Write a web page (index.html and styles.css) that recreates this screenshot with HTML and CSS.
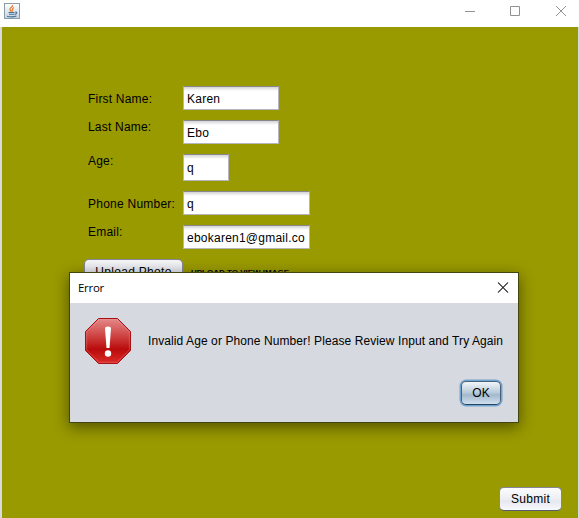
FILE: index.html
```html
<!DOCTYPE html>
<html lang="en">
<head>
<meta charset="utf-8">
<title>Registration</title>
<link rel="stylesheet" href="styles.css">
</head>
<body>
<div class="window">
  <header class="titlebar">
    <svg class="java" width="16" height="16" viewBox="0 0 16 16">
      <defs><linearGradient id="tile" x2="0" y2="1"><stop offset="0" stop-color="#fff"/><stop offset="1" stop-color="#c5d3df"/></linearGradient></defs>
      <rect x=".5" y=".5" width="15" height="15" fill="url(#tile)" stroke="#8b9cab"/>
      <path d="M8.500 2C9.500 4 5.500 4.500 6 6.500Q6.200 7.500 7.500 8.500M10 4.500C7.500 5.500 9.500 6.500 8 8.500" fill="none" stroke="#e77b2e" stroke-width="1.300"/>
      <path d="M4.500 9.500H10.500M5 11.300H10M3 13.300Q8 14.500 12.500 13M11 9Q13.500 8.700 12.500 10.500L10.500 11.500" fill="none" stroke="#457396" stroke-width="1.100"/>
    </svg>
    <svg class="controls" width="104" height="12" viewBox="0 0 104 12" fill="none" stroke="#929292">
      <path d="M1 6.500H11M46.500 1.500H55.500V10.500H46.500ZM92 1L102 11M102 1L92 11"/>
    </svg>
  </header>
  <main class="panel">
    <form class="form">
      <div class="row"><label class="low">First Name:</label><div class="field">Karen</div></div>
      <div class="row"><label>Last Name:</label><div class="field">Ebo</div></div>
      <div class="row tall"><label>Age:</label><div class="field small">q</div></div>
      <div class="row"><label class="low phone">Phone Number:</label><div class="field wide">q</div></div>
      <div class="row"><label>Email:</label><div class="field wide">ebokaren1@gmail.co</div></div>
      <div class="upload"><div class="button photo">Upload Photo</div><span class="hint">UPLOAD TO VIEW IMAGE</span></div>
    </form>
    <div class="button submit">Submit</div>
  </main>
</div>
<section class="dialog">
  <header class="dialog-title"><span class="caption">Error</span>
    <svg width="12" height="12" viewBox="0 0 12 12" fill="none" stroke="#000" stroke-width="1.050"><path d="M1 .5L11 10.500M11 .5L1 10.500"/></svg>
  </header>
  <div class="message">
    <svg width="48" height="48" viewBox="0 0 48 48">
      <defs><linearGradient id="stop" x2="0" y2="1"><stop offset="0" stop-color="#e58a8a"/><stop offset=".48" stop-color="#c93232"/><stop offset=".68" stop-color="#b90b0b"/><stop offset="1" stop-color="#dc2c2c"/></linearGradient></defs>
      <path d="M14.500 1.500H33.500L46.500 14.500V33.500L33.500 46.500H14.500L1.500 33.500V14.500Z" fill="url(#stop)" stroke="#a51216"/>
      <path d="M15 2.700H33L45.300 15V33L33 45.300H15L2.700 33V15Z" fill="none" stroke="#f5a0a0" stroke-opacity=".3"/>
      <path d="M21 11.500Q21 9.500 24 9.500T27 11.500L25.500 31H22.500Z" fill="#fff"/>
      <circle cx="24" cy="36.500" r="3.200" fill="#fff"/>
    </svg>
    <span class="text">Invalid Age or Phone Number! Please Review Input and Try Again</span>
  </div>
  <div class="button ok">OK</div>
</section>
</body>
</html>
```
FILE: styles.css
```css
* { box-sizing: border-box; }
body {
  margin: 0;
  width: 579px;
  height: 518px;
  overflow: hidden;
  background: #fff;
  color: #000;
  font: 12px/16px "Liberation Sans", Arial, sans-serif;
  white-space: nowrap;
}
.window { height: 518px; display: flex; flex-direction: column; }
.titlebar { height: 27px; padding: 3px 11px 0 4px; display: flex; justify-content: space-between; }
.controls { margin-top: 2px; }
.panel {
  flex: 1;
  display: flex;
  flex-direction: column;
  justify-content: space-between;
  padding: 59px 16px 7px 82px;
  background: #990;
  border: solid #d6d9df;
  border-width: 0 1px 0 2px;
}
.form { display: flex; flex-direction: column; gap: 10px; }
.row { display: flex; height: 24px; padding-left: 4px; }
.tall { height: 27px; }
label { width: 95px; margin-top: -1px; letter-spacing: .2px; }
.low { margin-top: 5px; }
.phone { letter-spacing: .24px; }
.field {
  width: 96px;
  height: 100%;
  padding: 2px 3px 0;
  display: flex;
  align-items: center;
  background: linear-gradient(#d3d3d5, #fff 4px);
  border: 1px solid #b4b5bd;
  border-top-color: #87888d;
  letter-spacing: .24px;
  overflow: hidden;
}
.small { width: 46px; padding-top: 0; }
.wide { width: 127px; }
.upload { display: flex; gap: 8px; align-items: center; }
.hint { font-size: 8px; font-weight: bold; margin-top: 4px; }
.button {
  height: 24px;
  display: flex;
  align-items: center;
  justify-content: center;
  border: 1px solid #84889a;
  border-bottom-color: #555b70;
  border-radius: 5px;
  background: linear-gradient(#fcfcfd, #eceef3 50%, #e5e8ef 60%, #f8f9fc);
  letter-spacing: .3px;
}
.photo { width: 99px; padding-top: 2px; background: linear-gradient(#f5f5f7, #d5d8e0); }
.submit { width: 63px; align-self: flex-end; }
.dialog {
  position: absolute;
  left: 69px;
  top: 272px;
  width: 450px;
  height: 151px;
  background: #d6d9df;
  border: 1px solid #44440e;
  box-shadow: 0 4px 14px rgba(0, 0, 0, .48);
}
.dialog-title {
  height: 30px;
  padding: 0 9px 0 8px;
  background: #fff;
  display: flex;
  align-items: center;
  justify-content: space-between;
  font-family: "Open Sans", "Noto Sans", sans-serif;
}
.caption { font-size: 11.500px; letter-spacing: -.3px; }
.message { display: flex; align-items: center; padding: 14px 0 0 14px; }
.text { margin: -1px 0 0 16px; letter-spacing: .09px; }
.ok {
  width: 40px;
  margin: 16px 0 0 391px;
  border: 1px solid #47617b;
  border-bottom-color: #244462;
  background: linear-gradient(#f1f5f9, #b9cad9 49%, #a3b8cb 58%, #cfe0ef);
  box-shadow: 0 0 0 1.500px #73a4d1;
  letter-spacing: 0;
}
```
